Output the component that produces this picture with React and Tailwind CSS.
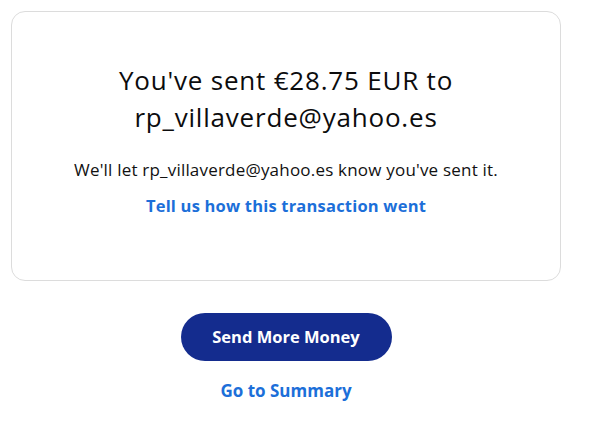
import React from 'react';

const App = () => {
    return (
        <div className="min-h-[429px] w-[594px] bg-white" style={{ fontFamily: '"Open Sans", Lato, sans-serif' }}>
            {/* Confirmation card */}
            <div className="pt-[11px] pl-[11px]">
                <div className="w-[550px] h-[270px] border border-[#dcdcdc] rounded-[14px] flex flex-col items-center pt-[50px]">
                    <h1 className="text-[26px] leading-[37px] tracking-[0.8px] text-[#0c0c0d] text-center">
                        You've sent €28.75 EUR to
                        <br />
                        rp_villaverde@yahoo.es
                    </h1>
                    <p className="mt-[22px] text-[17px] leading-[24px] tracking-[0.2px] text-[#111]">
                        We'll let rp_villaverde@yahoo.es know you've sent it.
                    </p>
                    <a href="#" className="mt-[12px] text-[16.5px] leading-[24px] tracking-[0.2px] font-bold text-[#1c6fd9]">
                        Tell us how this transaction went
                    </a>
                </div>
            </div>

            {/* Actions */}
            <div className="flex flex-col items-center w-[572px] mt-[32px]">
                <button className="w-[211px] h-[48px] rounded-full bg-[#142c8e] text-white font-bold text-[16.5px]">
                    Send More Money
                </button>
                <a href="#" className="mt-[18px] text-[17px] leading-[24px] font-bold text-[#1c6fd9]">
                    Go to Summary
                </a>
            </div>
        </div>
    );
};

export default App;
